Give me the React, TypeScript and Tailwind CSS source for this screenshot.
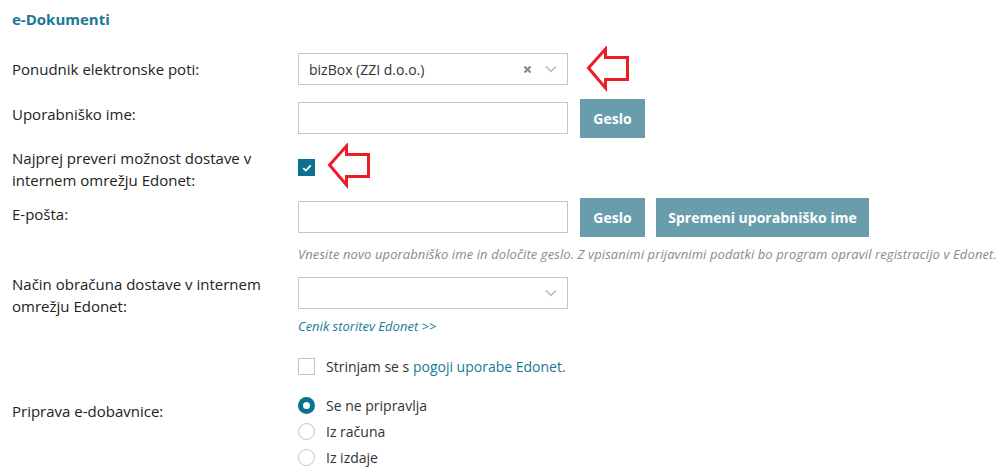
import React from "react";

const font = { fontFamily: '"Open Sans", "Liberation Sans", sans-serif' };

const Chevron = () => (
  <svg width="12" height="8" viewBox="0 0 12 8" fill="none">
    <path d="M1 1.5L6 6.5L11 1.5" stroke="#b5b5b5" strokeWidth="1.3" />
  </svg>
);

const Cross = () => (
  <svg width="9" height="9" viewBox="0 0 9 9" fill="none">
    <path d="M1.5 1.5L7.5 7.5M7.5 1.5L1.5 7.5" stroke="#8a8a8a" strokeWidth="2.2" />
  </svg>
);

const RedArrow = ({ className }: { className: string }) => (
  <svg className={className} width="46" height="46" viewBox="0 0 46 46" fill="none">
    <path
      d="M2.5 22L19.5 3V11.5H41.5V33.5H19.5V42Z"
      stroke="#ee1c25"
      strokeWidth="3"
      strokeLinejoin="miter"
      fill="white"
    />
  </svg>
);

const Radio = ({ checked, label }: { checked?: boolean; label: string }) => (
  <div className="flex items-center h-[26px]">
    {checked ? (
      <span className="w-[17px] h-[17px] rounded-full bg-[#0b7191] flex items-center justify-center">
        <span className="w-[7px] h-[7px] rounded-full bg-white" />
      </span>
    ) : (
      <span className="w-[17px] h-[17px] rounded-full border border-[#c4c4c4] bg-white" />
    )}
    <span className="ml-[11px] text-[14px] text-[#333]">{label}</span>
  </div>
);

export default function App() {
  return (
    <div style={font} className="relative w-[1003px] h-[472px] bg-white pl-[12px] text-[#222] overflow-hidden">
      <div className="pt-[8px] text-[15px] leading-[22px] font-bold text-[#1b7897]">e-Dokumenti</div>

      {/* Ponudnik */}
      <div className="flex mt-[23px] relative">
        <div className="w-[286px] pt-[5px] text-[15px] leading-[22px]">Ponudnik elektronske poti:</div>
        <div className="w-[270px] h-[32px] border border-[#c6c6c6] flex items-center pl-[10px] pr-[10px] text-[14px] text-[#333]">
          <span className="flex-1">bizBox (ZZI d.o.o.)</span>
          <span className="mr-[13px] flex"><Cross /></span>
          <span className="flex"><Chevron /></span>
        </div>
        <RedArrow className="absolute left-[574px] top-[-7px]" />
      </div>

      {/* Uporabnisko ime */}
      <div className="flex mt-[14px] h-[39px]">
        <div className="w-[286px] pt-[4px] text-[15px] leading-[22px]">Uporabniško ime:</div>
        <div className="w-[270px] h-[32px] mt-[3px] border border-[#c6c6c6]" />
        <button className="ml-[12px] w-[65px] h-[39px] bg-[#6a9dac] text-white text-[14px] font-bold">Geslo</button>
      </div>

      {/* Najprej preveri */}
      <div className="flex mt-[9px] relative">
        <div className="w-[286px] text-[15px] leading-[22px]">Najprej preveri možnost dostave v internem omrežju Edonet:</div>
        <div className="pt-[12px]">
          <span className="w-[17px] h-[17px] bg-[#0b7191] flex items-center justify-center">
            <svg width="10" height="8" viewBox="0 0 10 8" fill="none">
              <path d="M1.2 4.2L3.8 6.6L8.8 1.4" stroke="white" strokeWidth="1.8" />
            </svg>
          </span>
        </div>
        <RedArrow className="absolute left-[315px] top-[-4px]" />
      </div>

      {/* E-posta */}
      <div className="flex mt-[7px] h-[39px]">
        <div className="w-[286px] pt-[5px] text-[15px] leading-[22px]">E-pošta:</div>
        <div className="w-[270px] h-[32px] mt-[3px] border border-[#c6c6c6]" />
        <button className="ml-[12px] w-[65px] h-[39px] bg-[#6a9dac] text-white text-[14px] font-bold">Geslo</button>
        <button className="ml-[11px] w-[213px] h-[39px] bg-[#6a9dac] text-white text-[14px] font-bold">Spremeni uporabniško ime</button>
      </div>
      <div className="pl-[286px] mt-[8px] text-[13px] tracking-[0.1px] leading-[18px] italic text-[#8a8a8a] whitespace-nowrap">
        Vnesite novo uporabniško ime in določite geslo. Z vpisanimi prijavnimi podatki bo program opravil registracijo v Edonet.
      </div>

      {/* Nacin obracuna */}
      <div className="flex mt-[10px]">
        <div className="w-[286px] text-[15px] leading-[22px]">Način obračuna dostave v internem omrežju Edonet:</div>
        <div className="w-[270px] h-[32px] mt-[4px] border border-[#c6c6c6] flex items-center justify-end pr-[10px]">
          <Chevron />
        </div>
      </div>
      <div className="pl-[286px] text-[13px] leading-[18px] italic text-[#1b7897]">Cenik storitev Edonet &gt;&gt;</div>

      <div className="pl-[286px] mt-[20px] flex items-center h-[22px]">
        <span className="w-[17px] h-[17px] border border-[#c4c4c4] bg-white" />
        <span className="ml-[11px] text-[14px] text-[#333]">
          Strinjam se s <span className="text-[#1b7897]">pogoji uporabe Edonet.</span>
        </span>
      </div>

      {/* Priprava */}
      <div className="flex mt-[15px]">
        <div className="w-[286px] pt-[8px] text-[15px] leading-[22px]">Priprava e-dobavnice:</div>
        <div className="flex flex-col">
          <Radio checked label="Se ne pripravlja" />
          <Radio label="Iz računa" />
          <Radio label="Iz izdaje" />
        </div>
      </div>
    </div>
  );
}
